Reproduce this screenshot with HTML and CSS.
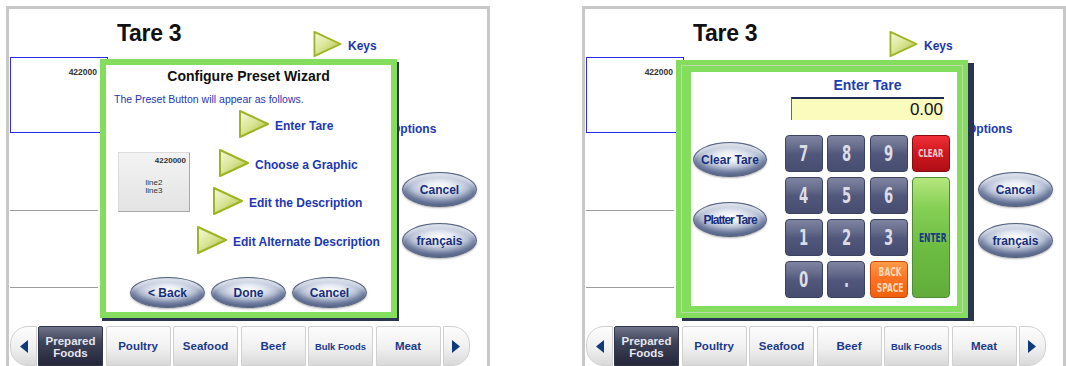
FILE: index.html
```html
<!DOCTYPE html>
<html lang="en">
<head>
  <meta charset="UTF-8">
  <meta name="viewport" content="width=device-width, initial-scale=1.0">
  <title>Configure Preset - Tare 3</title>
  <link rel="stylesheet" href="styles.css">
</head>
<body>
  <!-- shared shapes -->
  <svg class="svg-defs" aria-hidden="true">
    <defs>
      <linearGradient id="triFill" x1="0" y1="0" x2="0.9" y2="1">
        <stop offset="0" stop-color="#f7f9e2"/>
        <stop offset="0.5" stop-color="#d9e596"/>
        <stop offset="1" stop-color="#a6bd33"/>
      </linearGradient>
      <symbol id="tri" viewBox="0 0 32 30">
        <path d="M2 2 L30 15 L2 28 Z" fill="url(#triFill)" stroke="#9fb422" stroke-width="2" stroke-linejoin="round"/>
      </symbol>
    </defs>
  </svg>

  <div class="screens">

    <!-- Screen 1: preset wizard -->
    <div class="screen">
      <div class="screen-head">
        <h1 class="screen-title">Tare 3</h1>
        <a class="tri-link keys-link"><svg><use href="#tri"/></svg><span>Keys</span></a>
      </div>
      <div class="screen-body">
        <div class="plu-list">
          <div class="plu-item selected"><span class="plu-num">422000</span></div>
          <div class="plu-item"></div>
          <div class="plu-item"></div>
          <div class="plu-item last"></div>
        </div>
        <div class="side">
          <a class="tri-link options-link"><svg><use href="#tri"/></svg><span>Options</span></a>
          <button class="oval side-btn">Cancel</button>
          <button class="oval side-btn">français</button>
        </div>
      </div>
      <div class="tab-bar">
        <button class="tab-arrow prev"><svg viewBox="0 0 8 13"><path d="M8 0 L0 6.5 L8 13 Z"/></svg></button>
        <button class="tab current">Prepared<br>Foods</button>
        <button class="tab">Poultry</button>
        <button class="tab">Seafood</button>
        <button class="tab">Beef</button>
        <button class="tab small">Bulk Foods</button>
        <button class="tab">Meat</button>
        <button class="tab-arrow next"><svg viewBox="0 0 8 13"><path d="M0 0 L8 6.5 L0 13 Z"/></svg></button>
      </div>

      <div class="dialog wizard">
        <h2 class="wiz-title">Configure Preset Wizard</h2>
        <p class="wiz-note">The Preset Button will appear as follows.</p>
        <div class="wiz-main">
          <div class="preset-preview">
            <span class="pp-num">4220000</span>
            <span class="pp-lines">line2<br>line3</span>
          </div>
          <div class="wiz-steps">
            <a class="tri-link step step-1"><svg><use href="#tri"/></svg><span>Enter Tare</span></a>
            <a class="tri-link step step-2"><svg><use href="#tri"/></svg><span>Choose a Graphic</span></a>
            <a class="tri-link step step-3"><svg><use href="#tri"/></svg><span>Edit the Description</span></a>
            <a class="tri-link step step-4"><svg><use href="#tri"/></svg><span>Edit Alternate Description</span></a>
          </div>
        </div>
        <div class="wiz-buttons">
          <button class="oval">&lt; Back</button>
          <button class="oval">Done</button>
          <button class="oval">Cancel</button>
        </div>
      </div>
    </div>

    <!-- Screen 2: enter tare keypad -->
    <div class="screen">
      <div class="screen-head">
        <h1 class="screen-title">Tare 3</h1>
        <a class="tri-link keys-link"><svg><use href="#tri"/></svg><span>Keys</span></a>
      </div>
      <div class="screen-body">
        <div class="plu-list">
          <div class="plu-item selected"><span class="plu-num">422000</span></div>
          <div class="plu-item"></div>
          <div class="plu-item"></div>
          <div class="plu-item last"></div>
        </div>
        <div class="side">
          <a class="tri-link options-link"><svg><use href="#tri"/></svg><span>Options</span></a>
          <button class="oval side-btn">Cancel</button>
          <button class="oval side-btn">français</button>
        </div>
      </div>
      <div class="tab-bar">
        <button class="tab-arrow prev"><svg viewBox="0 0 8 13"><path d="M8 0 L0 6.5 L8 13 Z"/></svg></button>
        <button class="tab current">Prepared<br>Foods</button>
        <button class="tab">Poultry</button>
        <button class="tab">Seafood</button>
        <button class="tab">Beef</button>
        <button class="tab small">Bulk Foods</button>
        <button class="tab">Meat</button>
        <button class="tab-arrow next"><svg viewBox="0 0 8 13"><path d="M0 0 L8 6.5 L0 13 Z"/></svg></button>
      </div>

      <div class="dialog keypad">
        <div class="kp-frame">
          <div class="kp-left">
            <button class="oval">Clear Tare</button>
            <button class="oval squeeze">Platter Tare</button>
          </div>
          <div class="kp-right">
            <h2 class="kp-title">Enter Tare</h2>
            <div class="kp-display">0.00</div>
            <div class="kp-grid">
              <button class="key"><span>7</span></button>
              <button class="key"><span>8</span></button>
              <button class="key"><span>9</span></button>
              <button class="key clear"><span>CLEAR</span></button>
              <button class="key"><span>4</span></button>
              <button class="key"><span>5</span></button>
              <button class="key"><span>6</span></button>
              <button class="key enter"><span>ENTER</span></button>
              <button class="key"><span>1</span></button>
              <button class="key"><span>2</span></button>
              <button class="key"><span>3</span></button>
              <button class="key"><span>0</span></button>
              <button class="key"><span>.</span></button>
              <button class="key back"><span>BACK<br>SPACE</span></button>
            </div>
          </div>
        </div>
      </div>
    </div>

  </div>
</body>
</html>
```

FILE: styles.css
```css
/* General */
body {
  margin: 0;
  background: #ffffff;
  font-family: "Liberation Sans", Arial, sans-serif;
  color: #111111;
  overflow: hidden;
}

button {
  font-family: inherit;
  padding: 0;
  cursor: pointer;
}

.svg-defs {
  position: absolute;
  width: 0;
  height: 0;
  overflow: hidden;
}

.screens {
  display: flex;
  gap: 92px;
  padding: 6px 0 0 6px;
}

/* Scale screen */
.screen {
  position: relative;
  width: 484px;
  height: 360px;
  box-sizing: border-box;
  border: 3px solid #c8c8c8;
  border-bottom: none;
  overflow: hidden;
}

.screen-head {
  display: flex;
  height: 48px;
}

.screen-title {
  margin: 0;
  width: 303px;
  box-sizing: border-box;
  padding: 11px 0 0 108px;
  font-size: 23px;
  line-height: 27px;
  font-weight: bold;
  letter-spacing: -0.3px;
}

/* Green triangle links */
.tri-link {
  display: flex;
  align-items: center;
  color: #1c38b4;
  font-size: 12px;
  font-weight: bold;
  white-space: nowrap;
}

.tri-link svg {
  flex: none;
  width: 32px;
  height: 30px;
}

.tri-link span {
  margin-left: 5px;
  padding-top: 4px;
}

.keys-link {
  align-self: flex-start;
  margin-top: 21px;
}

.keys-link svg {
  width: 31px;
  height: 28px;
}

.screen-body {
  display: flex;
  height: 269px;
}

/* PLU list on the left */
.plu-list {
  width: 98px;
  margin-left: 1px;
}

.plu-item {
  width: 88px;
  height: 78px;
  box-sizing: border-box;
  border-bottom: 1px solid #9c9c9c;
}

.plu-item + .plu-item + .plu-item {
  height: 77px;
}

.plu-item.selected {
  width: 98px;
  height: 76px;
  border: 1px solid #2b2be6;
  padding: 3px 10px 0 0;
  text-align: right;
}

.plu-item.last {
  border-bottom: none;
}

.plu-num {
  font-size: 8.5px;
  font-weight: bold;
  color: #333333;
}

/* Right side column */
.side {
  margin-left: auto;
  width: 133px;
  display: flex;
  flex-direction: column;
  align-items: flex-start;
}

.options-link {
  margin-top: 55px;
}

.side-btn {
  margin-left: 48px;
  margin-top: 16px;
  width: 75px;
  height: 35px;
}

.options-link + .side-btn {
  margin-top: 30px;
}

/* Glossy oval buttons */
.oval {
  border: 1px solid #56637f;
  border-radius: 50%;
  background: radial-gradient(ellipse 62% 58% at 50% 42%, #ffffff 0%, #e6ebf3 30%, #b9c3d7 62%, #8492b2 88%, #6e7c9c 100%);
  box-shadow: inset 0 -6px 6px rgba(58, 72, 112, 0.5), inset 0 3px 3px rgba(255, 255, 255, 0.6), 0 1px 2px rgba(0, 0, 0, 0.3);
  color: #172e7e;
  font-size: 12px;
  font-weight: bold;
  white-space: nowrap;
}

.squeeze {
  letter-spacing: -1px;
}

/* Category tabs */
.tab-bar {
  display: flex;
  height: 40px;
  margin-left: 1px;
}

.tab,
.tab-arrow {
  height: 40px;
  border: 1px solid #d0d0d0;
  background: linear-gradient(#fdfdfd 0%, #f0f0f0 55%, #d9d9d9 100%);
  color: #1a3a8c;
  font-weight: bold;
}

.tab {
  width: 65px;
  margin-left: 2.5px;
  border-radius: 2px 2px 0 0;
  font-size: 11.5px;
}

.tab.current {
  margin-left: 1px;
  border-color: #30344a;
  background: linear-gradient(#70748a 0%, #3f4358 40%, #24273a 100%);
  color: #e6e6ee;
  font-size: 11.5px;
  line-height: 12px;
  padding-top: 2px;
}

.tab.small {
  font-size: 9.4px;
}

.tab-arrow {
  width: 27px;
  display: flex;
  align-items: center;
}

.tab-arrow svg {
  width: 8px;
  height: 13px;
  fill: #0f3a7c;
}

.tab-arrow.prev {
  border-radius: 18px 0 0 18px;
  padding-left: 9px;
}

.tab-arrow.next {
  margin-left: 2.5px;
  border-radius: 0 18px 18px 0;
  padding-left: 8px;
}

/* Dialogs laid over the screen */
.dialog {
  position: absolute;
  box-sizing: border-box;
  background: #ffffff;
  box-shadow: 2px 3px 0 #2b3352;
}

.wizard {
  left: 91px;
  top: 50px;
  width: 297px;
  height: 259px;
  border: 6px solid #84dd5c;
}

.wiz-title {
  margin: 0;
  padding-top: 3px;
  font-size: 14px;
  line-height: 17px;
  text-align: center;
}

.wiz-note {
  margin: 8px 0 0 8px;
  font-size: 10.5px;
  line-height: 12px;
  color: #1f36b6;
}

.wiz-main {
  display: flex;
  align-items: center;
  margin-top: 4px;
}

.preset-preview {
  flex: none;
  width: 72px;
  height: 60px;
  margin-left: 12px;
  box-sizing: border-box;
  border: 1px solid #dcdcdc;
  border-right-color: #a9a9a9;
  border-bottom-color: #a9a9a9;
  background: linear-gradient(#f3f3f3, #e3e3e3);
  display: flex;
  flex-direction: column;
  color: #333333;
  font-size: 8px;
}

.pp-num {
  align-self: flex-end;
  margin: 3px 3px 0 0;
  font-weight: bold;
}

.pp-lines {
  margin-top: 14px;
  text-align: center;
  line-height: 8.5px;
}

.wiz-steps {
  margin-left: 6px;
  display: flex;
  flex-direction: column;
  gap: 8.5px;
}

.step-1 { padding-left: 42px; }
.step-2 { padding-left: 22px; }
.step-3 { padding-left: 16px; }

.wiz-buttons {
  display: flex;
  justify-content: center;
  gap: 6px;
  margin-top: 22.5px;
}

.wiz-buttons .oval {
  width: 75px;
  height: 31px;
}

/* Keypad dialog */
.keypad {
  left: 91px;
  top: 51px;
  width: 292px;
  height: 258px;
  border: 5px solid #84dd5c;
  box-shadow: 6px 3px 0 #2b3352;
}

.kp-frame {
  margin: 1px;
  height: 246px;
  box-sizing: border-box;
  border: solid #84dd5c;
  border-width: 6px 5px 6px 9px;
  box-shadow: 0 0 0 1px #bcd9ab;
  display: flex;
}

.kp-left {
  width: 94px;
  padding-top: 70px;
  box-sizing: border-box;
}

.kp-left .oval {
  display: block;
  margin-left: 2px;
  width: 74px;
  height: 35px;
}

.kp-left .oval + .oval {
  margin-top: 25px;
}

.kp-right {
  width: 165px;
}

.kp-title {
  margin: 0;
  padding-top: 5px;
  font-size: 14px;
  line-height: 17px;
  text-align: center;
  color: #1d3fb3;
}

.kp-display {
  margin: 3px 0 0 6px;
  width: 153px;
  height: 23px;
  box-sizing: border-box;
  border-top: 2px solid #1f2b57;
  border-left: 1px solid #6b6b6b;
  background: #fbfbbd;
  font-size: 17px;
  line-height: 21px;
  text-align: right;
  padding-right: 1px;
}

.kp-grid {
  margin-top: 15px;
  display: grid;
  grid-template-columns: repeat(4, 38px);
  grid-template-rows: repeat(4, 37px);
  column-gap: 4.33px;
  row-gap: 5px;
}

.key {
  border: 1px solid #3c4262;
  border-radius: 4px;
  background: linear-gradient(#7e84a0 0%, #676d8c 30%, #50577b 52%, #474d70 100%);
  color: #dcdce6;
  font-family: "DejaVu Sans Condensed", "DejaVu Sans", sans-serif;
  font-size: 21px;
  font-weight: bold;
}

.key span {
  display: inline-block;
  transform: scaleX(0.7);
}

.key.clear {
  border-color: #8a0c12;
  background: linear-gradient(#f03038 0%, #d01820 45%, #b00e16 100%);
  color: #f4cfd0;
  font-size: 11px;
}

.key.enter {
  grid-column: 4;
  grid-row: 2 / span 3;
  border-color: #4f8c33;
  background: linear-gradient(#b6e67e 0%, #86cf55 25%, #6cbc42 60%, #62ad3b 100%);
  color: #163a82;
  font-size: 12px;
}

.key.back {
  border-color: #c64a0c;
  background: linear-gradient(#ff9a48 0%, #ff7424 45%, #f0600e 100%);
  color: #ffd9b6;
  font-size: 12px;
  line-height: 16px;
}
```
